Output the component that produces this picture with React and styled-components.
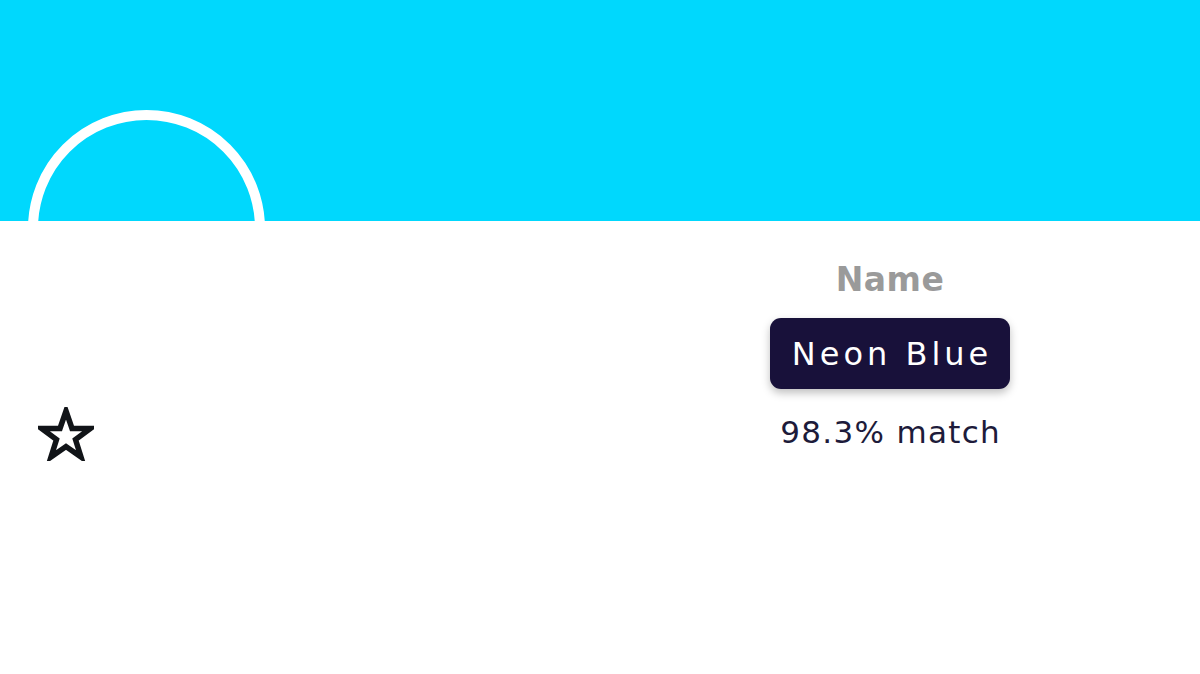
import React from "react";
import styled, { createGlobalStyle } from "styled-components";

const Global = createGlobalStyle`
  html, body { margin: 0; padding: 0; background: #ffffff; }
  body { font-family: "DejaVu Sans", "Noto Sans", sans-serif; }
`;

const Page = styled.div`
  width: 1200px;
  height: 674px;
  overflow: hidden;
  background: #ffffff;
`;

const Banner = styled.header`
  height: 221px;
  background: #00d8fd;
  overflow: hidden;
  display: flex;
  align-items: flex-start;
  padding: 110px 0 0 28px;
  box-sizing: border-box;
`;

const AvatarRing = styled.div`
  width: 237px;
  height: 237px;
  flex-shrink: 0;
  box-sizing: border-box;
  border: 10px solid #ffffff;
  border-radius: 50%;
`;

const Body = styled.main`
  display: grid;
  grid-template-columns: 690px 400px;
`;

const FavCell = styled.div`
  padding: 186px 0 0 38px;
`;

const InfoColumn = styled.section`
  display: flex;
  flex-direction: column;
  align-items: center;
  padding-top: 41px;
`;

const Label = styled.div`
  font-size: 33px;
  line-height: 36px;
  font-weight: 600;
  color: #9a9a9a;
  letter-spacing: 0.5px;
`;

const NameTag = styled.div`
  margin-top: 20px;
  height: 71px;
  box-sizing: border-box;
  padding: 0 18px 0 22px;
  display: flex;
  align-items: center;
  background: #18113a;
  border-radius: 11px;
  box-shadow: 0 4px 8px rgba(0, 0, 0, 0.25);
  color: #ffffff;
  font-size: 32px;
  letter-spacing: 4px;
`;

const Match = styled.div`
  margin-top: 25px;
  font-size: 31px;
  line-height: 36px;
  color: #1d1b3a;
  letter-spacing: 1.3px;
  padding-left: 1.3px;
`;

const StarIcon = () => (
  <svg width="56" height="54" viewBox="0 0 56 54">
    <polygon
      points="28,4 34,21.5 52.5,21.5 37.5,32.5 43,50 28,39.5 13,50 18.5,32.5 3.5,21.5 22,21.5"
      fill="none"
      stroke="#111418"
      strokeWidth="5.5"
      strokeLinejoin="miter"
    />
  </svg>
);

export default function App() {
  return (
    <Page>
      <Global />
      <Banner>
        <AvatarRing />
      </Banner>
      <Body>
        <FavCell>
          <StarIcon />
        </FavCell>
        <InfoColumn>
          <Label>Name</Label>
          <NameTag>Neon Blue</NameTag>
          <Match>98.3% match</Match>
        </InfoColumn>
      </Body>
    </Page>
  );
}
